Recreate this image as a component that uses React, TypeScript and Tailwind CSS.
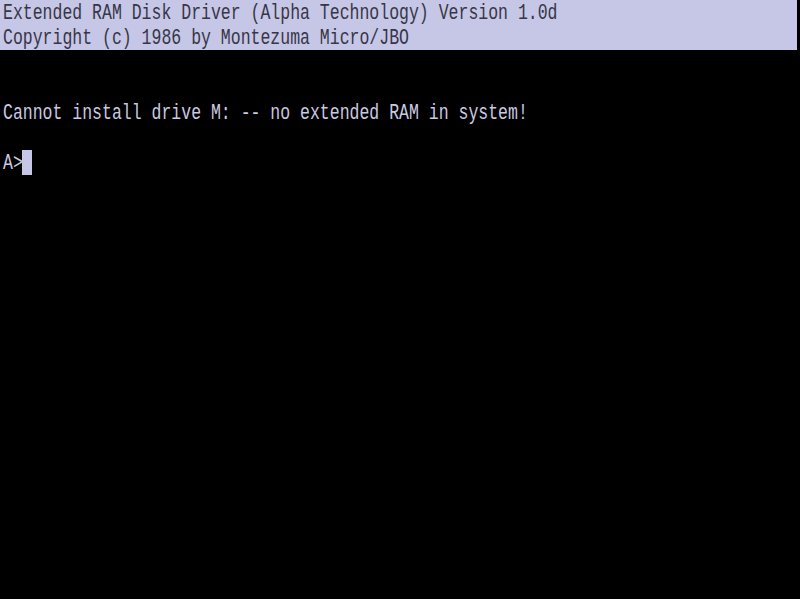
const Line = ({ children }: { children?: React.ReactNode }) => (
  <div className="h-[25px] leading-[25px] whitespace-pre scale-y-[1.35]">{children}</div>
);

const App = () => {
  return (
    <div
      className="w-[800px] h-[599px] bg-black overflow-hidden text-[16.5px] text-[#cacae2]"
      style={{ fontFamily: '"Liberation Mono", "DejaVu Sans Mono", monospace' }}
    >
      <div className="w-[797px] h-[50px] bg-[#c6c6e6] text-[#363646] pl-[3px]">
        <Line>Extended RAM Disk Driver (Alpha Technology) Version 1.0d</Line>
        <Line>Copyright (c) 1986 by Montezuma Micro/JBO</Line>
      </div>
      <div className="pl-[3px]">
        <Line />
        <Line />
        <Line>Cannot install drive M: -- no extended RAM in system!</Line>
        <Line />
        <div className="flex h-[25px]">
          <Line>A&gt;</Line>
          <div className="w-[10px] h-[25px] ml-[-1px] bg-[#c6c6e6]" />
        </div>
      </div>
    </div>
  );
};

export default App;
